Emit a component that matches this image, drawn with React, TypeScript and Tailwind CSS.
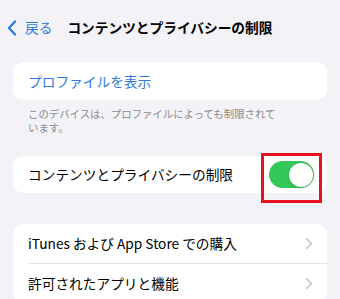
import React from "react";

const font = { fontFamily: '"Noto Sans CJK JP", "Noto Sans", sans-serif' };

function Chevron() {
  return (
    <svg width="8" height="13" viewBox="0 0 8 13" fill="none">
      <path d="M1.5 1.5 L6.5 6.5 L1.5 11.5" stroke="#c4c4c7" strokeWidth="1.6" strokeLinecap="round" strokeLinejoin="round" />
    </svg>
  );
}

export default function App() {
  return (
    <div className="w-[340px] h-[299px] overflow-hidden bg-[#f2f2f7]" style={font}>
      {/* Header */}
      <div className="h-[56px] flex items-center pl-[7px]">
        <svg width="10" height="16" viewBox="0 0 10 16" fill="none" className="mr-[8px]">
          <path d="M8 1.5 L2 8 L8 14.5" stroke="#2f7ad8" strokeWidth="2.4" strokeLinecap="round" strokeLinejoin="round" />
        </svg>
        <span className="text-[13.7px] leading-none text-[#2f7ad8]">戻る</span>
        <span className="ml-[15px] text-[13.7px] leading-none font-bold text-black">コンテンツとプライバシーの制限</span>
      </div>

      {/* Card 1 */}
      <div className="mt-[6px] mx-[13px] h-[38px] rounded-[10px] bg-white flex items-center px-[15px]">
        <span className="text-[13.7px] text-[#2f7ad8]">プロファイルを表示</span>
      </div>
      <div className="pt-[7px] px-[28px] text-[10.4px] leading-[14px] text-[#8a8a8e]">
        このデバイスは、プロファイルによっても制限されて
        <br />
        います。
      </div>

      {/* Card 2 */}
      <div className="mt-[21px] mx-[13px] h-[37px] rounded-[10px] bg-white flex items-center justify-between pl-[15px] pr-[13px]">
        <span className="text-[13.7px] text-black">コンテンツとプライバシーの制限</span>
        <div className="relative">
          <div className="w-[45px] h-[27px] rounded-full bg-[#34c759] relative">
            <div className="absolute right-[1.5px] top-[1.5px] w-[24px] h-[24px] rounded-full bg-white shadow-[0_1px_3px_rgba(0,0,0,0.2)]" />
          </div>
          <div className="absolute left-[-8px] top-[-8px] w-[61px] h-[50px] border-[3px] border-[#e5141c]" />
        </div>
      </div>

      {/* Card 3 */}
      <div className="mt-[31px] mx-[13px] rounded-[10px] bg-white">
        <div className="h-[39px] flex items-center justify-between pl-[15px] pr-[14px]">
          <span className="text-[13.7px] text-black">
            iTunes<span className="ml-[3px]">および</span>
            <span className="ml-[3px]">App Store</span>
            <span className="ml-[3px]">での購入</span>
          </span>
          <Chevron />
        </div>
        <div className="ml-[15px] h-px bg-[#e3e3e6]" />
        <div className="h-[39px] flex items-center justify-between pl-[15px] pr-[14px]">
          <span className="text-[13.7px] text-black">許可されたアプリと機能</span>
          <Chevron />
        </div>
      </div>
    </div>
  );
}
